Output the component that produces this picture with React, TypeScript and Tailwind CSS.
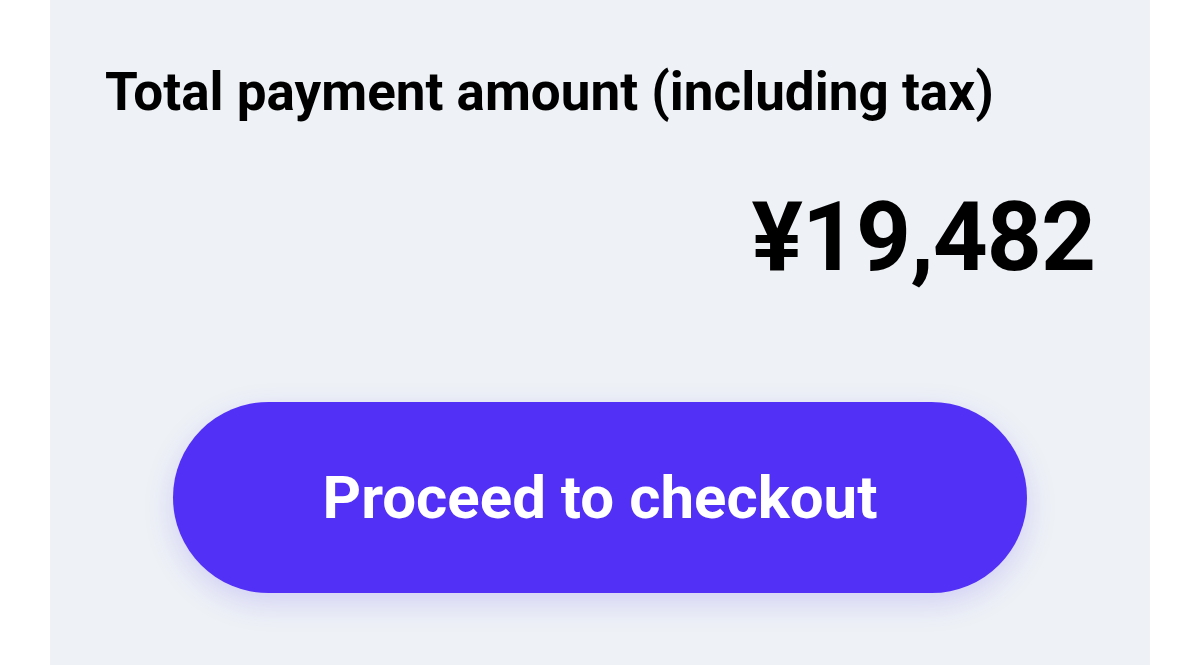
export default function App() {
  return (
    <div className="flex h-[665px] w-[1200px] justify-center bg-white font-['Roboto',sans-serif]">
      <div className="flex w-[1100px] flex-col bg-[#eef2f6] px-[55px] pt-[61px]">
        <h2 className="text-[53px] font-bold leading-[62px] text-black">
          Total payment amount (including tax)
        </h2>

        <div className="mt-[59px] text-right text-[96px] font-bold leading-[110px] tracking-[-1px] text-black">
          ¥19,482
        </div>

        <div className="mt-[110px] flex justify-center">
          <button
            type="button"
            className="h-[191px] w-[854px] rounded-full bg-[#5230f6] text-[60px] font-bold text-white shadow-[0_10px_30px_rgba(82,48,246,0.18)]"
          >
            Proceed to checkout
          </button>
        </div>
      </div>
    </div>
  )
}
